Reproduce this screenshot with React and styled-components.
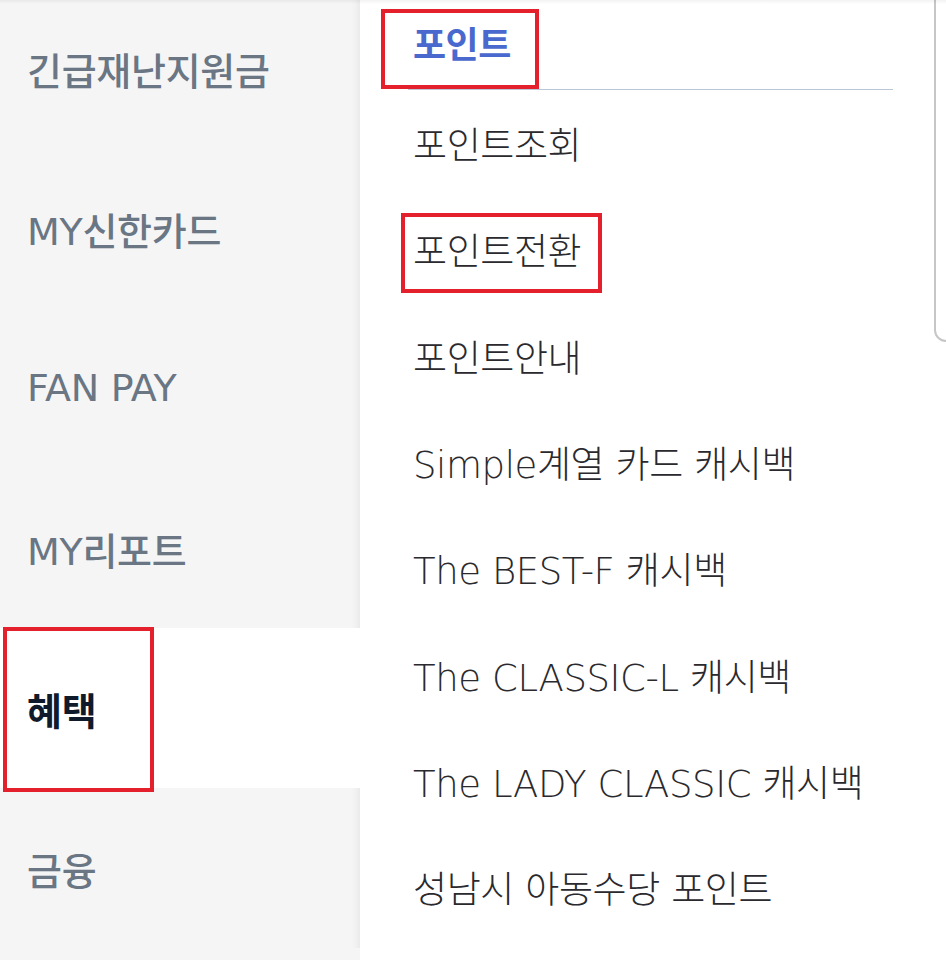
import styled, { createGlobalStyle } from "styled-components";

const MENUS = ["긴급재난지원금", "MY신한카드", "FAN PAY", "MY리포트", "혜택", "금융"];
const ACTIVE = "혜택";

const SUB_ITEMS = [
  "포인트조회",
  "포인트전환",
  "포인트안내",
  "Simple계열 카드 캐시백",
  "The BEST-F 캐시백",
  "The CLASSIC-L 캐시백",
  "The LADY CLASSIC 캐시백",
  "성남시 아동수당 포인트",
];
const MARKED = "포인트전환";

const GlobalStyle = createGlobalStyle`
  html, body {
    margin: 0;
    padding: 0;
    background: #ffffff;
  }
  body {
    font-family: "Noto Sans CJK KR", "Noto Sans", sans-serif;
    overflow: hidden;
  }
`;

function App() {
  return (
    <>
      <GlobalStyle />
      <Page>
        <Sidebar>
          {MENUS.map((menu) => (
            <MenuItem key={menu} $active={menu === ACTIVE}>
              {menu}
              {menu === ACTIVE && <MenuMark />}
            </MenuItem>
          ))}
        </Sidebar>
        <Content>
          <SubList>
            <Category>
              포인트
              <HeaderMark />
            </Category>
            {SUB_ITEMS.map((item) => (
              <SubItem key={item}>
                {item}
                {item === MARKED && <ItemMark />}
              </SubItem>
            ))}
          </SubList>
          <ScrollTrack />
        </Content>
      </Page>
    </>
  );
}

const Page = styled.div`
  display: flex;
  width: 946px;
  height: 960px;
  overflow: hidden;
  position: relative;

  &::before {
    content: "";
    position: absolute;
    left: 0;
    right: 0;
    top: 0;
    height: 4px;
    background: linear-gradient(rgba(0, 0, 0, 0.05), rgba(0, 0, 0, 0));
    z-index: 3;
  }
`;

const Sidebar = styled.nav`
  width: 360px;
  flex-shrink: 0;
  background: #f5f5f6;
  display: flex;
  flex-direction: column;
  margin-top: -12px;
`;

const MenuItem = styled.div`
  position: relative;
  height: 160px;
  flex-shrink: 0;
  display: flex;
  align-items: center;
  padding-left: 27px;
  font-family: "DejaVu Sans", "Noto Sans CJK KR", sans-serif;
  font-size: 38px;
  letter-spacing: -0.3px;
  font-weight: ${(p) => (p.$active ? 700 : 500)};
  color: ${(p) => (p.$active ? "#0f1a2b" : "#6a7683")};
  background: ${(p) => (p.$active ? "#ffffff" : "transparent")};
  box-shadow: ${(p) =>
    p.$active ? "none" : "inset -9px 0 8px -8px rgba(0, 0, 0, 0.08)"};
`;

const Mark = styled.span`
  position: absolute;
  border: 4px solid #e3202b;
  box-sizing: border-box;
  pointer-events: none;
`;

const MenuMark = styled(Mark)`
  left: 3px;
  top: -1px;
  width: 151px;
  height: 165px;
`;

const Content = styled.main`
  flex: 1;
  position: relative;
  background: #ffffff;
`;

const SubList = styled.div`
  width: 485px;
  margin-left: 48px;
  display: flex;
  flex-direction: column;
`;

const Category = styled.h2`
  position: relative;
  margin: 0;
  height: 90px;
  display: flex;
  align-items: center;
  padding: 0 0 6px 5px;
  box-sizing: border-box;
  font-size: 36px;
  font-weight: 700;
  color: #4a69cf;
  border-bottom: 1px solid #bcc7d6;
  letter-spacing: -0.5px;
`;

const HeaderMark = styled(Mark)`
  left: -27px;
  top: 9px;
  width: 158px;
  height: 80px;
`;

const SubItem = styled.div`
  position: relative;
  height: 106.3px;
  display: flex;
  align-items: center;
  padding-left: 5px;
  font-family: "DejaVu Sans", "Noto Sans CJK KR", sans-serif;
  font-size: 37px;
  font-weight: 200;
  color: #2a2a2e;
  letter-spacing: -0.4px;
  white-space: nowrap;
`;

const ItemMark = styled(Mark)`
  left: -7px;
  top: 17px;
  width: 201px;
  height: 80px;
`;

const ScrollTrack = styled.div`
  position: absolute;
  right: -6px;
  top: -10px;
  width: 18px;
  height: 352px;
  border: 2px solid #c6c6c6;
  border-bottom-left-radius: 12px;
  box-sizing: border-box;
`;

export default App;
